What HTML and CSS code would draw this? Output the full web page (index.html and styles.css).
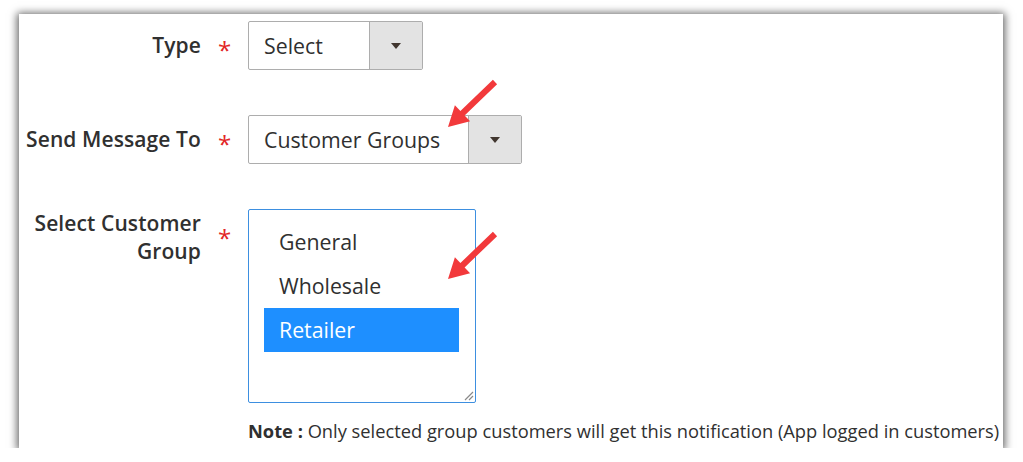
FILE: index.html
```html
<!DOCTYPE html>
<html>
<head>
<meta charset="utf-8">
<link rel="stylesheet" href="styles.css">
</head>
<body>
<div class="panel">
  <div class="row">
    <div class="label">Type</div>
    <div class="req">*</div>
    <div class="select w-type">
      <span class="value">Select</span>
      <span class="btn"><span class="tri"></span></span>
    </div>
  </div>
  <div class="row">
    <div class="label">Send Message To</div>
    <div class="req">*</div>
    <div class="select w-groups">
      <span class="value">Customer Groups</span>
      <span class="btn"><span class="tri"></span></span>
    </div>
  </div>
  <div class="row row-top">
    <div class="label label-top">Select Customer<br>Group</div>
    <div class="req">*</div>
    <div class="control">
      <div class="multi">
        <div class="opt">General</div>
        <div class="opt">Wholesale</div>
        <div class="opt sel">Retailer</div>
        <svg class="grip" width="12" height="12" viewBox="0 0 12 12"><path d="M11 3 L3 11 M11 7 L7 11" stroke="#8a8a8a" stroke-width="1.2"/></svg>
      </div>
      <div class="note"><b>Note :</b> Only selected group customers will get this notification (App logged in customers)</div>
    </div>
  </div>
  <svg class="arrow a1" width="65" height="60" viewBox="0 0 65 60"><polygon points="57.1,9.2 24.6,40.4 30.1,46.2 8,52 14.9,30.2 20.4,36 52.9,4.8" fill="#f2393b"/></svg>
  <svg class="arrow a2" width="65" height="60" viewBox="0 0 65 60"><polygon points="57.1,9.2 24.6,40.4 30.1,46.2 8,52 14.9,30.2 20.4,36 52.9,4.8" fill="#f2393b"/></svg>
</div>
</body>
</html>
```
FILE: styles.css
```css
html, body { margin: 0; padding: 0; background: #fff; }
body {
  padding: 14px 0 0 19px;
  font-family: "Open Sans", "Liberation Sans", sans-serif;
  color: #303030;
}
.panel {
  position: relative;
  width: 984px;
  height: 434px;
  background: #fff;
  box-shadow: 0 1px 8px 2px rgba(0,0,0,0.6);
  box-sizing: border-box;
  padding-top: 7px;
}
.row {
  display: flex;
  align-items: flex-start;
  margin-bottom: 45px;
}
.label {
  width: 182px;
  flex: none;
  text-align: right;
  font-size: 21px;
  font-weight: 600;
  line-height: 28px;
  padding-top: 10px;
  letter-spacing: 0.1px;
}
.label-top { padding-top: 0; }
.req {
  width: 47px;
  flex: none;
  color: #e22626;
  font-size: 24px;
  line-height: 24px;
  text-align: center;
  padding-top: 17px;
  box-sizing: border-box;
  padding-left: 0;
}
.select {
  display: flex;
  height: 49px;
  box-sizing: border-box;
  border: 1px solid #adadad;
  border-radius: 2px;
  background: #fff;
}
.w-type { width: 175px; }
.w-groups { width: 274px; }
.value {
  flex: 1;
  font-size: 21.3px;
  line-height: 47px;
  padding-left: 15px;
}
.btn {
  width: 52px;
  flex: none;
  background: #e3e3e3;
  border-left: 1px solid #adadad;
  display: flex;
  align-items: center;
  justify-content: center;
}
.tri {
  width: 0; height: 0;
  border-left: 5px solid transparent;
  border-right: 5px solid transparent;
  border-top: 6px solid #41362f;
}
.row-top { margin-bottom: 0; margin-top: 1px; }
.multi {
  position: relative;
  width: 228px;
  height: 194px;
  box-sizing: border-box;
  border: 1px solid #3d8fe0;
  border-radius: 2px;
  padding: 10px 16px 0 15px;
}
.opt {
  height: 44px;
  line-height: 44px;
  padding-left: 15px;
  font-size: 21.3px;
}
.opt.sel { background: #1e8fff; color: #fff; }
.grip { position: absolute; right: 1px; bottom: 1px; }
.note {
  margin-top: 16px;
  font-size: 18.3px;
  line-height: 24px;
  white-space: nowrap;
}
.note b { font-weight: 700; }
.arrow { position: absolute; }
.a1 { left: 421px; top: 61px; }
.a2 { left: 421px; top: 213px; }
```
